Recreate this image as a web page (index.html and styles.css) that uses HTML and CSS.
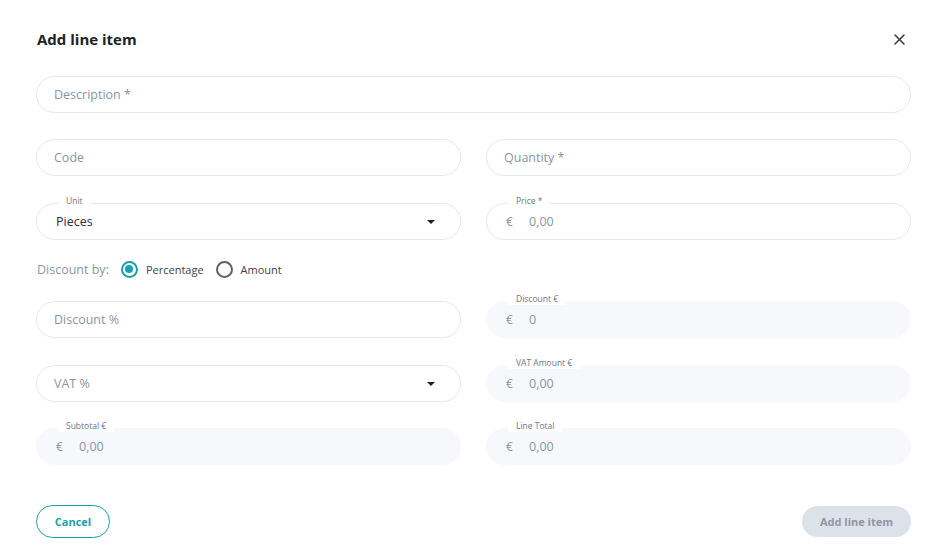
FILE: index.html
```html
<!DOCTYPE html>
<html lang="en">
<head>
<meta charset="utf-8">
<title>Add line item</title>
<link rel="stylesheet" href="styles.css">
</head>
<body>
<div class="dialog">
  <header class="dialog-head">
    <h1 class="dialog-title">Add line item</h1>
    <button class="close-btn" aria-label="Close">
      <svg width="11" height="11" viewBox="0 0 11 11"><path d="M1 1 L10 10 M10 1 L1 10" stroke="#3a3a3a" stroke-width="1.5" stroke-linecap="round"/></svg>
    </button>
  </header>

  <div class="row row-full">
    <div class="field"><span class="placeholder">Description *</span></div>
  </div>

  <div class="row">
    <div class="field"><span class="placeholder">Code</span></div>
    <div class="field"><span class="placeholder">Quantity *</span></div>
  </div>

  <div class="row row-wide-gap">
    <div class="field select">
      <span class="float-label">Unit</span>
      <span class="value">Pieces</span>
      <span class="caret"></span>
    </div>
    <div class="field">
      <span class="float-label">Price *</span>
      <span class="currency">€</span>
      <span class="amount">0,00</span>
    </div>
  </div>

  <div class="radio-row">
    <span class="radio-title">Discount by:</span>
    <label class="radio checked"><span class="radio-dot"></span>Percentage</label>
    <label class="radio"><span class="radio-dot"></span>Amount</label>
  </div>

  <div class="row row-after-radio">
    <div class="field"><span class="placeholder">Discount %</span></div>
    <div class="field readonly">
      <span class="float-label">Discount €</span>
      <span class="currency">€</span>
      <span class="amount">0</span>
    </div>
  </div>

  <div class="row row-wide-gap">
    <div class="field select">
      <span class="placeholder">VAT %</span>
      <span class="caret"></span>
    </div>
    <div class="field readonly">
      <span class="float-label">VAT Amount €</span>
      <span class="currency">€</span>
      <span class="amount">0,00</span>
    </div>
  </div>

  <div class="row">
    <div class="field readonly">
      <span class="float-label">Subtotal €</span>
      <span class="currency">€</span>
      <span class="amount">0,00</span>
    </div>
    <div class="field readonly">
      <span class="float-label">Line Total</span>
      <span class="currency">€</span>
      <span class="amount">0,00</span>
    </div>
  </div>

  <footer class="dialog-foot">
    <button class="btn btn-outline">Cancel</button>
    <button class="btn btn-disabled">Add line item</button>
  </footer>
</div>
</body>
</html>
```

FILE: styles.css
```css
* { box-sizing: border-box; }

html, body {
  margin: 0;
  background: #fff;
}

body {
  font-family: "Open Sans", "Noto Sans", sans-serif;
  color: #222;
}

.dialog {
  width: 940px;
  padding: 23px 29px 0 36px;
}

.dialog-head {
  height: 32px;
  display: flex;
  align-items: center;
  justify-content: space-between;
}

.dialog-title {
  margin: 0 0 0 1px;
  font-size: 15px;
  font-weight: 700;
  color: #222;
}

.close-btn {
  border: 0;
  background: none;
  padding: 0;
  width: 11px;
  height: 11px;
  margin-right: 6px;
  margin-top: 1px;
  display: flex;
}

.row {
  display: grid;
  grid-template-columns: 425px 425px;
  column-gap: 25px;
  margin-top: 26px;
}

.row-full {
  grid-template-columns: 875px;
  margin-top: 21px;
}

.row-wide-gap {
  margin-top: 27px;
}

.field {
  position: relative;
  height: 37px;
  border: 1px solid #e3e7ef;
  border-radius: 19px;
  display: flex;
  align-items: center;
  padding: 0 17px;
  font-size: 12.5px;
  background: #fff;
}

.field.readonly {
  background: #f7f8fb;
  border-color: #f7f8fb;
}

.placeholder {
  color: #8b95a7;
}

.value {
  color: #2b2f36;
  padding-left: 2px;
}

.currency {
  color: #8b95a7;
  font-size: 12px;
  padding-left: 2px;
  width: 25px;
}

.amount {
  color: #8b95a7;
  font-size: 12.5px;
}

.float-label {
  position: absolute;
  top: -10px;
  left: 21px;
  padding: 0 8px;
  font-size: 8.5px;
  line-height: 13px;
  color: #6f7684;
  background: #fff;
}

.caret {
  position: absolute;
  right: 25px;
  top: 16px;
  width: 0;
  height: 0;
  border-left: 4px solid transparent;
  border-right: 4px solid transparent;
  border-top: 4px solid #1f1f1f;
}

.radio-row {
  display: flex;
  align-items: center;
  height: 20px;
  margin-top: 19px;
  font-size: 11px;
  color: #3d434c;
}

.radio-title {
  font-size: 12.5px;
  color: #8b95a7;
  margin-left: 1px;
  margin-right: 12px;
}

.radio {
  display: flex;
  align-items: center;
  margin-right: 12px;
}

.radio-dot {
  width: 17px;
  height: 17px;
  border-radius: 50%;
  border: 2px solid #59636d;
  margin-right: 8px;
  position: relative;
}

.radio.checked .radio-dot {
  border-color: #1aa0ae;
}

.radio.checked .radio-dot::after {
  content: "";
  position: absolute;
  left: 2.5px;
  top: 2.5px;
  width: 8px;
  height: 8px;
  border-radius: 50%;
  background: #1aa0ae;
}

.row-after-radio {
  margin-top: 22px;
}

.dialog-foot {
  display: flex;
  justify-content: space-between;
  align-items: center;
  margin-top: 40px;
  height: 33px;
}

.btn {
  font-family: inherit;
  font-size: 11px;
  font-weight: 700;
  border-radius: 17px;
  cursor: pointer;
}

.btn-outline {
  width: 74px;
  height: 33px;
  background: #fff;
  border: 1.5px solid #1aa0ae;
  color: #1aa0ae;
}

.btn-disabled {
  width: 109px;
  height: 31px;
  background: #dde2ea;
  border: 0;
  color: #8d97a8;
}
```
